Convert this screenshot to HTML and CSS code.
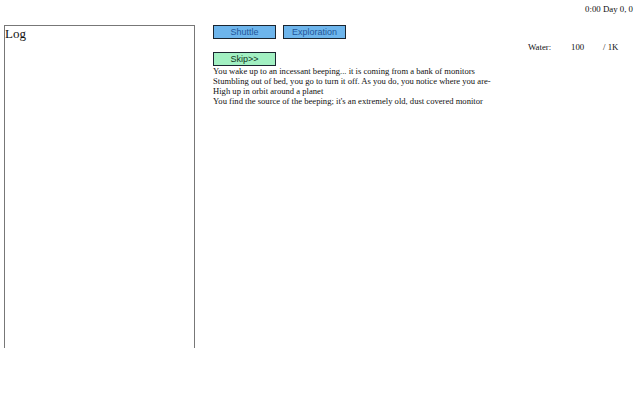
FILE: index.html
```html
<!DOCTYPE html>
<html>
<head>
<meta charset="utf-8">
<link rel="stylesheet" href="styles.css">
</head>
<body>
<div class="clock">0:00 Day 0, 0</div>
<div class="main">
  <div class="log">Log</div>
  <div class="panel">
    <div class="tabs">
      <button class="tab">Shuttle</button>
      <button class="tab">Exploration</button>
    </div>
    <div class="resources">
      <span class="res-name">Water:</span>
      <span class="res-val">100</span>
      <span class="res-max">/ 1K</span>
    </div>
    <button class="skip">Skip&gt;&gt;</button>
    <div class="story">
      <p>You wake up to an incessant beeping... it is coming from a bank of monitors</p>
      <p>Stumbling out of bed, you go to turn it off. As you do, you notice where you are-</p>
      <p>High up in orbit around a planet</p>
      <p>You find the source of the beeping; it's an extremely old, dust covered monitor</p>
    </div>
  </div>
</div>
</body>
</html>
```
FILE: styles.css
```css
html, body {
  margin: 0;
  padding: 0;
  background: #fff;
  font-family: "Liberation Serif", "Times New Roman", serif;
  color: #111;
}
.clock {
  height: 25px;
  box-sizing: border-box;
  padding: 4px 7px 0 0;
  text-align: right;
  font-size: 8.8px;
  line-height: 10px;
}
.main {
  display: flex;
  align-items: flex-start;
  padding-left: 4px;
}
.log {
  width: 191px;
  height: 323px;
  box-sizing: border-box;
  border: 1px solid #777;
  border-bottom: none;
  font-size: 13px;
  line-height: 14px;
  padding: 1px 0 0 0;
}
.panel {
  flex: 1;
  padding-left: 18px;
  padding-right: 20px;
}
.tabs {
  display: flex;
  gap: 7px;
}
button {
  font-family: "Liberation Sans", Arial, sans-serif;
  font-size: 9px;
  line-height: 10px;
  width: 63px;
  height: 14px;
  padding: 0;
  margin: 0;
  border: 1.5px solid #1a2530;
}
.tab {
  background: #6db5ec;
  color: #23569a;
}
.resources {
  display: flex;
  justify-content: flex-end;
  white-space: nowrap;
  font-size: 8.8px;
  line-height: 10px;
  height: 13px;
  padding-top: 3px;
  box-sizing: border-box;
}
.res-name { width: 43px; }
.res-val { width: 32px; }
.res-max { width: 17px; }
.skip {
  display: block;
  background: #a2f0c2;
  color: #113322;
}
.story {
  font-size: 8.6px;
  line-height: 10px;
}
.story p {
  margin: 0;
}
```
